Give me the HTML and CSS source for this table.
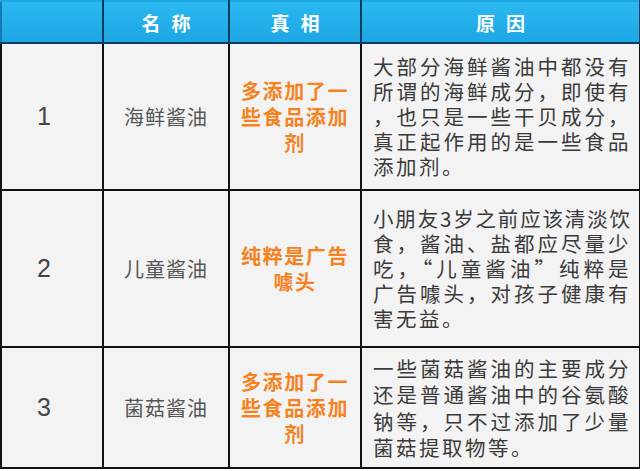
FILE: index.html
```html
<!DOCTYPE html>
<html lang="zh-CN">
<head>
<meta charset="utf-8">
<link rel="stylesheet" href="styles.css">
</head>
<body>
<table class="tbl">
  <colgroup>
    <col class="c1"><col class="c2"><col class="c3"><col class="c4">
  </colgroup>
  <thead>
    <tr class="head">
      <th></th>
      <th>名称</th>
      <th>真相</th>
      <th>原因</th>
    </tr>
  </thead>
  <tbody>
    <tr class="r1">
      <td class="num">1</td>
      <td class="name">海鲜酱油</td>
      <td class="truth"><span class="ln">多添加了一</span><span class="ln">些食品添加</span><span class="ln">剂</span></td>
      <td class="why"><span class="ln j">大部分海鲜酱油中都没有</span><span class="ln j">所谓的海鲜成分，即使有</span><span class="ln j">，也只是一些干贝成分，</span><span class="ln j">真正起作用的是一些食品</span><span class="ln">添加剂。</span></td>
    </tr>
    <tr class="r2">
      <td class="num">2</td>
      <td class="name">儿童酱油</td>
      <td class="truth"><span class="ln">纯粹是广告</span><span class="ln">噱头</span></td>
      <td class="why"><span class="ln j tight">小朋友3岁之前应该清淡饮</span><span class="ln j">食，酱油、盐都应尽量少</span><span class="ln j">吃，“儿童酱油”纯粹是</span><span class="ln j">广告噱头，对孩子健康有</span><span class="ln">害无益。</span></td>
    </tr>
    <tr class="r3">
      <td class="num">3</td>
      <td class="name">菌菇酱油</td>
      <td class="truth"><span class="ln">多添加了一</span><span class="ln">些食品添加</span><span class="ln">剂</span></td>
      <td class="why loose"><span class="ln j">一些菌菇酱油的主要成分</span><span class="ln j">还是普通酱油中的谷氨酸</span><span class="ln j">钠等，只不过添加了少量</span><span class="ln">菌菇提取物等。</span></td>
    </tr>
  </tbody>
</table>
</body>
</html>
```

FILE: styles.css
```css
html, body {
  margin: 0;
  padding: 0;
  background: #ffffff;
}
body {
  width: 640px;
  height: 471px;
  overflow: hidden;
  font-family: "Noto Sans CJK SC", "Noto Sans", sans-serif;
}
.tbl {
  border-collapse: collapse;
  table-layout: fixed;
  width: 639px;
  background: #f3f3f3;
}
.c1 { width: 102px; }
.c2 { width: 126px; }
.c3 { width: 132px; }
.c4 { width: 279px; }

.tbl th, .tbl td {
  border: 2px solid #111;
  padding: 0;
  text-align: center;
  vertical-align: middle;
}
.head th {
  height: 40px;
  background: linear-gradient(#2bb9f1, #1da6e4);
  color: #ffffff;
  font-weight: bold;
  font-size: 19px;
  letter-spacing: 11px;
  text-indent: 11px;
  border-color: #0e3d63;
  border-top-color: #1ea8e6;
}
.head th:first-child { border-left-color: #1579b5; }
.r1 td { height: 145px; }
.r2 td { height: 155px; }
.r3 td { height: 119px; }

.ln {
  display: block;
  white-space: nowrap;
}
.num {
  font-family: "Liberation Sans", Arial, sans-serif;
  font-size: 25px;
  color: #444;
  padding-right: 16px !important;
}
.name {
  font-size: 20px;
  letter-spacing: 1px;
  color: #555;
}
.truth {
  font-size: 20px;
  font-weight: bold;
  color: #f5821f;
  letter-spacing: 1.6px;
  line-height: 26px;
}
.why {
  text-align: left !important;
  font-size: 20.5px;
  color: #3a3a3a;
  letter-spacing: 2.5px;
  line-height: 25px;
  padding-left: 11px !important;
}
.why.loose {
  line-height: 26.5px;
}
.j {
  width: 258px;
  text-align: justify;
  text-align-last: justify;
}
.tight {
  letter-spacing: 1px;
}
```
